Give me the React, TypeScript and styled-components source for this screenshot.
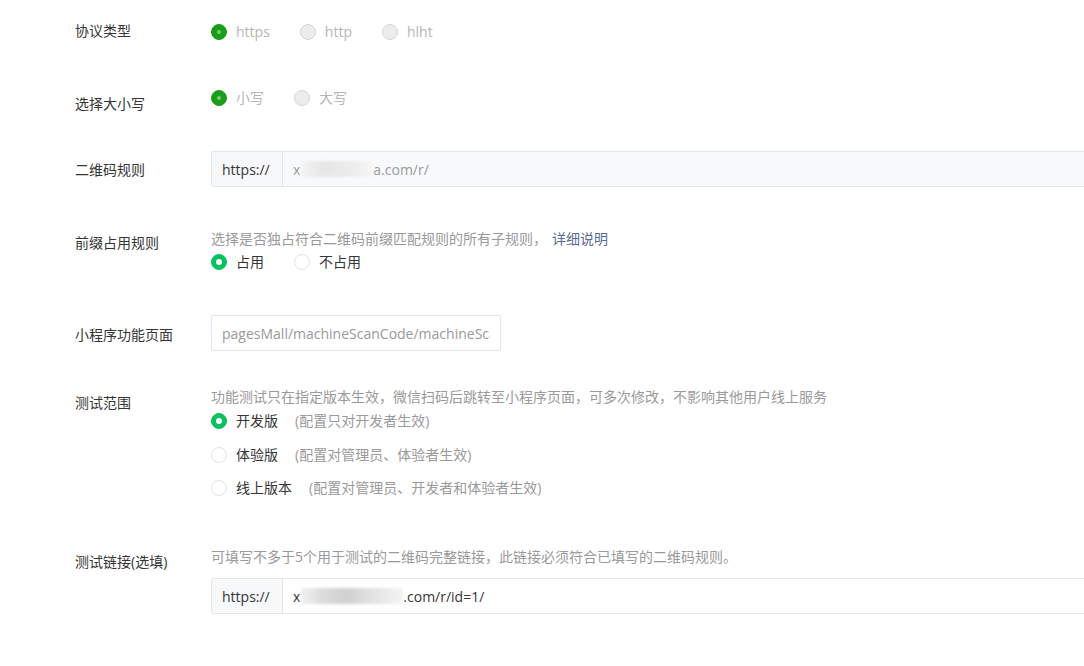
import styled, { createGlobalStyle } from 'styled-components'

const FONT = `"Open Sans", "Noto Sans CJK SC", sans-serif`

const GlobalStyle = createGlobalStyle`
    html, body {
        margin: 0;
        padding: 0;
        background: #ffffff;
        overflow: hidden;
    }
    body {
        font-family: ${FONT};
        font-size: 14px;
        color: #353535;
    }
`

type RadioState = 'on' | 'off' | 'disabledOn' | 'disabledOff'

export default function App() {
    return (
        <Page>
            <GlobalStyle />

            <Row $top={22}>
                <Label $offset={-1}>协议类型</Label>
                <Body>
                    <RadioLine>
                        <Radio state="disabledOn" text="https" />
                        <Radio state="disabledOff" text="http" />
                        <Radio state="disabledOff" text="hlht" />
                    </RadioLine>
                </Body>
            </Row>

            <Row $top={46}>
                <Label $offset={6}>选择大小写</Label>
                <Body>
                    <RadioLine>
                        <Radio state="disabledOn" text="小写" />
                        <Radio state="disabledOff" text="大写" />
                    </RadioLine>
                </Body>
            </Row>

            <Row $top={37}>
                <Label $offset={9}>二维码规则</Label>
                <Body>
                    <InputGroup $disabled>
                        <Prefix>https://</Prefix>
                        <GroupValue $muted>
                            x<Smudge $w={72} />a.com/r/
                        </GroupValue>
                    </InputGroup>
                </Body>
            </Row>

            <Row $top={42}>
                <Label $offset={4}>前缀占用规则</Label>
                <Body>
                    <Hint>
                        选择是否独占符合二维码前缀匹配规则的所有子规则，
                        <HintLink>详细说明</HintLink>
                    </Hint>
                    <RadioLine $gap={3}>
                        <Radio state="on" text="占用" />
                        <Radio state="off" text="不占用" />
                    </RadioLine>
                </Body>
            </Row>

            <Row $top={43}>
                <Label $offset={10}>小程序功能页面</Label>
                <Body>
                    <TextInput readOnly value="pagesMall/machineScanCode/machineScanCode" />
                </Body>
            </Row>

            <Row $top={36}>
                <Label $offset={6}>测试范围</Label>
                <Body>
                    <Hint>功能测试只在指定版本生效，微信扫码后跳转至小程序页面，可多次修改，不影响其他用户线上服务</Hint>
                    <OptionList>
                        <Radio state="on" text="开发版" note="(配置只对开发者生效)" />
                        <Radio state="off" text="体验版" note="(配置对管理员、体验者生效)" />
                        <Radio state="off" text="线上版本" note="(配置对管理员、开发者和体验者生效)" />
                    </OptionList>
                </Body>
            </Row>

            <Row $top={49}>
                <Label $offset={5}>测试链接(选填)</Label>
                <Body>
                    <Hint>可填写不多于5个用于测试的二维码完整链接，此链接必须符合已填写的二维码规则。</Hint>
                    <InputGroup $gap={11}>
                        <Prefix>https://</Prefix>
                        <GroupValue>
                            x<Smudge $w={102} $dark />.com/r/id=1/
                        </GroupValue>
                    </InputGroup>
                </Body>
            </Row>
        </Page>
    )
}

function Radio({ state, text, note }: { state: RadioState; text: string; note?: string }) {
    const disabled = state === 'disabledOn' || state === 'disabledOff'
    return (
        <RadioItem>
            <Circle $state={state} />
            <RadioText $disabled={disabled}>{text}</RadioText>
            {note && <RadioNote>{note}</RadioNote>}
        </RadioItem>
    )
}

const Page = styled.div`
    padding-left: 75px;
    width: 1200px;
`

const Row = styled.div<{ $top: number }>`
    display: flex;
    align-items: flex-start;
    margin-top: ${p => p.$top}px;
`

const Label = styled.div<{ $offset: number }>`
    width: 136px;
    flex-shrink: 0;
    line-height: 20px;
    margin-top: ${p => p.$offset}px;
    color: #353535;
`

const Body = styled.div`
    display: flex;
    flex-direction: column;
    flex: 1;
`

const RadioLine = styled.div<{ $gap?: number }>`
    display: flex;
    align-items: center;
    height: 20px;
    gap: 30px;
    margin-top: ${p => p.$gap ?? 0}px;
`

const OptionList = styled.div`
    display: flex;
    flex-direction: column;
    gap: 13.5px;
    margin-top: 4px;
`

const RadioItem = styled.label`
    display: flex;
    align-items: center;
    height: 20px;
    line-height: 20px;
`

const Circle = styled.span<{ $state: RadioState }>`
    position: relative;
    box-sizing: border-box;
    width: 16px;
    height: 16px;
    border-radius: 50%;
    margin-right: 9px;
    flex-shrink: 0;
    background: ${p =>
        p.$state === 'on' ? '#07c160' :
        p.$state === 'disabledOn' ? '#1a9d1a' :
        p.$state === 'disabledOff' ? '#ececec' : '#ffffff'};
    border: 1px solid ${p =>
        p.$state === 'on' ? '#07c160' :
        p.$state === 'disabledOn' ? '#1a9d1a' :
        p.$state === 'disabledOff' ? '#d6d6d6' : '#e3e3e3'};

    &::after {
        content: '';
        display: ${p => (p.$state === 'on' || p.$state === 'disabledOn' ? 'block' : 'none')};
        position: absolute;
        left: 50%;
        top: 50%;
        width: ${p => (p.$state === 'on' ? 6 : 4)}px;
        height: ${p => (p.$state === 'on' ? 6 : 4)}px;
        transform: translate(-50%, -50%);
        border-radius: 50%;
        background: ${p => (p.$state === 'on' ? '#ffffff' : '#7cc67c')};
    }
`

const RadioText = styled.span<{ $disabled: boolean }>`
    color: ${p => (p.$disabled ? '#b6b6b6' : '#353535')};
`

const RadioNote = styled.span`
    margin-left: 17px;
    color: #9a9a9a;
`

const Hint = styled.div`
    line-height: 20px;
    color: #9a9a9a;
`

const HintLink = styled.a`
    margin-left: 5px;
    color: #576b95;
    cursor: pointer;
`

const InputGroup = styled.div<{ $disabled?: boolean; $gap?: number }>`
    display: flex;
    width: 920px;
    height: 36px;
    box-sizing: border-box;
    margin-top: ${p => p.$gap ?? 0}px;
    border: 1px solid #e5e5e5;
    border-radius: 2px;
    background: ${p => (p.$disabled ? '#f8f9fb' : '#ffffff')};
`

const Prefix = styled.div`
    display: flex;
    align-items: center;
    padding: 0 10px;
    width: 71px;
    box-sizing: border-box;
    border-right: 1px solid #e5e5e5;
    background: #f7f8fa;
    color: #353535;
`

const GroupValue = styled.div<{ $muted?: boolean }>`
    display: flex;
    align-items: center;
    padding-left: 10px;
    color: ${p => (p.$muted ? '#9a9a9a' : '#353535')};
`

const Smudge = styled.span<{ $w: number; $dark?: boolean }>`
    display: inline-block;
    width: ${p => p.$w}px;
    height: 16px;
    margin-left: 1px;
    background: ${p =>
        p.$dark
            ? 'linear-gradient(90deg, #f2f2f2 0%, #dcdcdc 20%, #d0d0d0 45%, #e2e2e2 70%, #f4f4f4 100%)'
            : 'linear-gradient(90deg, #f4f4f4 0%, #e6e6e6 30%, #ececec 70%, #f6f6f6 100%)'};
    filter: blur(1.5px);
`

const TextInput = styled.input`
    width: 290px;
    height: 36px;
    box-sizing: border-box;
    padding: 0 10px;
    border: 1px solid #e5e5e5;
    border-radius: 2px;
    font-family: ${FONT};
    font-size: 14px;
    color: #9a9a9a;
    background: #ffffff;
    outline: none;
`
